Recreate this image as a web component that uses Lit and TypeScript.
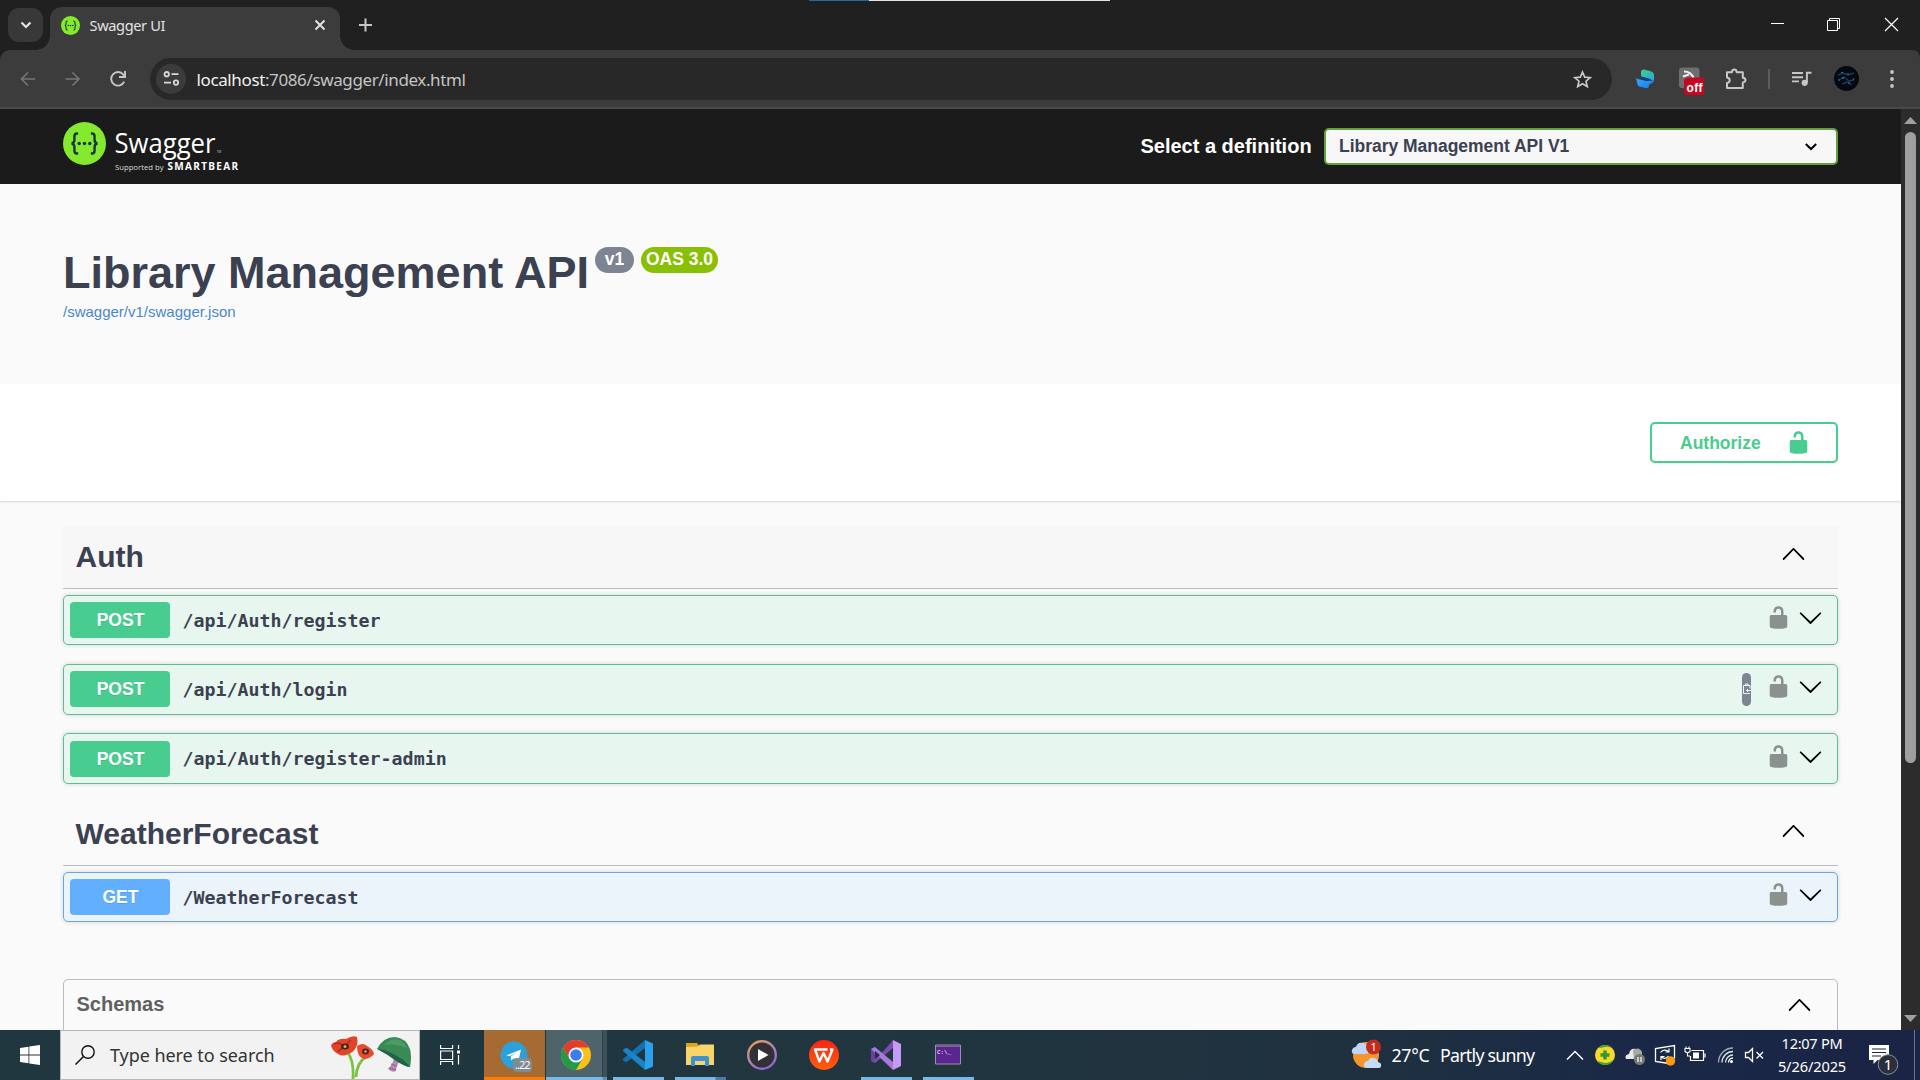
import { LitElement, html, svg, css, nothing } from "lit";
import { customElement, property } from "lit/decorators.js";

const lock = html`<svg class="lock" width="25" height="25" viewBox="0 0 20 20"><path fill="currentColor" d="M15.8 8H14V5.6C14 2.703 12.665 1 10 1 7.334 1 6 2.703 6 5.6V6h2v-.801C8 3.754 8.797 3 10 3c1.203 0 2 .754 2 2.199V8H4c-.553 0-1 .646-1 1.199V17c0 .549.428 1.139.951 1.307l1.197.387C5.672 18.861 6.55 19 7.1 19h5.8c.549 0 1.428-.139 1.951-.307l1.196-.387c.524-.167.953-.757.953-1.306V9.199C17 8.646 16.352 8 15.8 8z"/></svg>`;
const chevron = (up: boolean) => html`<svg class="chev" width="25" height="25" viewBox="0 0 20 20"><path fill="#000" d=${up
  ? "M17.418 14.908c.272.281.709.281.979 0s.271-.736 0-1.014l-7.908-8.139c-.271-.28-.709-.28-.979 0l-7.908 8.139c-.271.278-.271.733 0 1.014s.709.281.979 0L10 7.28z"
  : "M17.418 6.109c.272-.268.709-.268.979 0s.271.701 0 .969l-7.908 7.83c-.27.268-.707.268-.979 0l-7.908-7.83c-.27-.268-.27-.701 0-.969.271-.268.709-.268.979 0L10 13.25z"}/></svg>`;
const braces = svg`<circle cx="22" cy="22" r="22" fill="#85ea2d"/><g fill="none" stroke="#173647" stroke-width="2.5"><path d="M15.5 11.7h-1.2q-2.6 0-2.6 2.8v3.6q0 3.4-2.9 3.9 2.9.5 2.9 3.9v3.6q0 2.8 2.6 2.8h1.2"/><path d="M28.5 11.7h1.2q2.6 0 2.6 2.8v3.6q0 3.4 2.9 3.9-2.9.5-2.9 3.9v3.6q0 2.8-2.6 2.8h-1.2"/></g><g fill="#173647"><circle cx="16.6" cy="22" r="1.8"/><circle cx="22" cy="22" r="1.8"/><circle cx="27.4" cy="22" r="1.8"/></g>`;

@customElement("tab-strip")
class TabStrip extends LitElement {
  static styles = css`
    :host { display: flex; height: 50px; background: #202020; position: relative; font-family: "Noto Sans", "Open Sans", sans-serif; }
    .loading { position: absolute; top: 0; left: 809px; width: 301px; height: 1px; background: linear-gradient(90deg, #1d6ca8 60px, #e6e6e6 60px); }
    .menu { width: 35px; height: 34px; margin: 8px 0 0 8px; border-radius: 11px; background: #383838; display: grid; place-items: center; }
    .tab { width: 290px; height: 43px; margin: 7px 0 0 7px; border-radius: 12px 12px 0 0; background: #3c3c3c; display: flex; align-items: center; position: relative; box-sizing: border-box; padding: 0 14px 7px 10.5px; }
    .tab::before, .tab::after { content: ""; position: absolute; bottom: 0; width: 14px; height: 14px; }
    .tab::before { left: -14px; background: radial-gradient(circle at 0 0, transparent 13.5px, #3c3c3c 14px); }
    .tab::after { right: -14px; background: radial-gradient(circle at 100% 0, transparent 13.5px, #3c3c3c 14px); }
    .title { flex: 1; margin-left: 10px; font-size: 14.6px; letter-spacing: -0.38px; color: #e3e3e3; line-height: 20px; }
    .plus { margin: 18px 0 0 18px; }
    .controls { margin-left: auto; display: flex; }
    .controls svg { width: 57px; height: 50px; }
  `;
  render() {
    return html`
      <div class="loading"></div>
      <div class="menu"><svg width="12" height="8" viewBox="0 0 12 8"><path d="M1.5 1.5 6 6l4.5-4.5" fill="none" stroke="#e3e3e3" stroke-width="2.2"/></svg></div>
      <div class="tab">
        <svg width="19" height="19" viewBox="0 0 44 44">${braces}</svg>
        <span class="title">Swagger UI</span>
        <svg width="12" height="12" viewBox="0 0 12 12"><path d="M1.5 1.5l9 9M10.5 1.5l-9 9" stroke="#e3e3e3" stroke-width="1.9"/></svg>
      </div>
      <svg class="plus" width="14" height="14" viewBox="0 0 14 14"><path d="M7.5 .5v13M1 7h13" stroke="#c7c7c7" stroke-width="2"/></svg>
      <div class="controls">
        <svg viewBox="0 0 57 50"><path d="M22 23.5h13" stroke="#fff" stroke-width="1"/></svg>
        <svg viewBox="0 0 57 50"><path d="M21.5 20.5h10v10h-10zM23.5 20v-1.5h10v10H32" fill="none" stroke="#fff"/></svg>
        <svg viewBox="0 0 57 50"><path d="M22 18l13 13M35 18L22 31" stroke="#fff" stroke-width="1.2"/></svg>
      </div>`;
  }
}

@customElement("nav-bar")
class NavBar extends LitElement {
  static styles = css`
    :host { display: block; background: #202020; }
    .bar { display: flex; align-items: center; height: 57px; background: #3c3c3c; border-bottom: 2px solid #4a4a4a; border-radius: 10px 8px 0 0; padding-left: 5px; box-sizing: content-box; }
    .slot { width: 45px; height: 57px; flex: none; display: grid; place-items: center; }
    .omni { width: 1462px; height: 42px; margin-left: 10px; border-radius: 21px; background: #282828; display: flex; align-items: center; box-sizing: border-box; padding: 0 20px 0 6px; flex: none; }
    .site { width: 30px; height: 30px; border-radius: 50%; background: #3c3c3c; display: grid; place-items: center; }
    .url { flex: 1; margin-left: 10.5px; padding-top: 2px; font: 17px/24px "Noto Sans", "Open Sans", sans-serif; letter-spacing: -0.38px; color: #c4c4c4; }
    .host { color: #f0f0f0; }
    .exts { display: flex; margin-left: 10.5px; }
    .exts .slot { width: 45.3px; }
    .badge { font: 700 12px/14px "Liberation Sans", sans-serif; }
    .sep { width: 2px; height: 20px; background: #5c5c5c; margin: auto 0; }
    .exts .split { width: 20.5px; display: grid; place-items: center; }
  `;
  render() {
    return html`<div class="bar">
      <div class="slot"><svg width="16" height="16" viewBox="0 0 16 16"><path d="M15 8H2M8 1.5L1.5 8 8 14.5" fill="none" stroke="#757575" stroke-width="1.7"/></svg></div>
      <div class="slot"><svg width="16" height="16" viewBox="0 0 16 16"><path d="M.5 8h13M7.5 1.5L14 8 7.5 14.5" fill="none" stroke="#757575" stroke-width="1.7"/></svg></div>
      <div class="slot"><svg width="18" height="18" viewBox="0 0 18 18"><path d="M15.2 11.6A6.8 6.8 0 1 1 14.3 4.6l1.8 2" fill="none" stroke="#c7c7c7" stroke-width="1.9"/><path d="M16 1v6h-6" fill="none" stroke="#c7c7c7" stroke-width="1.9"/></svg></div>
      <div class="omni">
        <div class="site"><svg width="17" height="15" viewBox="0 0 17 15"><g fill="none" stroke="#d8d8d8" stroke-width="1.8"><circle cx="3.7" cy="3.2" r="2.2"/><path d="M8.5 3.2h7M1 11.6h7"/><circle cx="13" cy="11.6" r="2.2"/></g></svg></div>
        <span class="url"><span class="host">localhost</span>:7086/swagger/index.html</span>
        <svg width="19" height="18" viewBox="0 0 19 18"><path d="M9.5 2l2.2 5.1 5.5.5-4.2 3.6 1.3 5.4-4.8-2.9-4.8 2.9L6 11.2 1.8 7.6l5.5-.5z" fill="none" stroke="#c7c7c7" stroke-width="1.7"/></svg>
      </div>
      <div class="exts">
        <div class="slot"><svg width="20" height="20" viewBox="0 0 20 20"><defs><linearGradient id="a" x2="1" y2="1"><stop stop-color="#3fd08c"/><stop offset="1" stop-color="#28a6d8"/></linearGradient><linearGradient id="b" x2="1" y2="1"><stop stop-color="#35b0ff"/><stop offset="1" stop-color="#1778e8"/></linearGradient></defs><path d="M6 7.5V3.5Q6 .5 9 .5l6 1.5q4 1 4 4V12L15 10z" fill="url(#a)"/><path d="M.7 7.5q0 2 2 2.5l9 2 6-.5q1.3 0 1.3-1.2 0 3-2.300 4l-2.300 1-.8 2.600q-.6 1.700-3 1.200L5 17.800q-2.300-.5-2.600-2.500z" fill="url(#b)"/><path d="M6 7.500l9 2.500.5 1.800-3.500.100L6 10.500z" fill="#123f88"/></svg></div>
        <div class="slot"><svg width="28" height="32" viewBox="0 0 28 32"><rect x="3" y="4.5" width="20.5" height="20.5" rx="3" fill="#6e6e6e"/><path d="M8 8.5q7 0 9.5 6.5M7 13.5l6-2" stroke="#eee" stroke-width="2.2" fill="none"/><rect x="8" y="14.5" width="22" height="18" rx="4" fill="#c4081f"/><text class="badge" x="10.5" y="29" fill="#fff" textLength="16">off</text></svg></div>
        <div class="slot"><svg width="22" height="24" viewBox="0 0 22 24"><path d="M2 5.3h4.900Q7 2.500 9.300 2.500T11.700 5.300H17.800v5.500q2.700.2 2.700 2.300t-2.700 2.300v5.500H2v-4.800q2.700-.6 2.700-2.900T2 10.4z" fill="none" stroke="#c7c7c7" stroke-width="2" stroke-linejoin="round"/></svg></div>
        <div class="split"><div class="sep"></div></div>
        <div class="slot"><svg width="21" height="18" viewBox="0 0 21 18"><path d="M1 3h11M1 7.2h11M1 11.4h7M15.9 12.5V2.7h4.600" fill="none" stroke="#c7c7c7" stroke-width="1.9"/><circle cx="13.7" cy="12.8" r="3.1" fill="#c7c7c7"/></svg></div>
        <div class="slot"><svg width="25" height="25" viewBox="0 0 25 25"><circle cx="12.5" cy="12.5" r="12.5" fill="#040810"/><path d="M4 9l5-2 5 2 6-2M5 14l5-3 5 4 5-1M8 18l5-2 5 3" fill="none" stroke="#123f60" stroke-width="1.4"/><g fill="#3186b8"><circle cx="9" cy="12" r=".9"/><circle cx="14" cy="8" r=".8"/><circle cx="15" cy="17" r=".8"/><circle cx="19.5" cy="13" r=".8"/><circle cx="5" cy="14" r=".8"/><circle cx="8" cy="6.5" r=".8"/></g></svg></div>
        <div class="slot"><svg width="4" height="18" viewBox="0 0 4 18"><g fill="#c7c7c7"><circle cx="2" cy="2" r="1.9"/><circle cx="2" cy="9" r="1.9"/><circle cx="2" cy="16" r="1.9"/></g></svg></div>
      </div>
    </div>`;
  }
}

@customElement("swagger-topbar")
class SwaggerTopbar extends LitElement {
  static styles = css`
    :host { display: flex; height: 75px; background: #1b1b1b; box-sizing: border-box; padding: 0 63px; justify-content: space-between; }
    .logo { display: block; margin-top: 12px; }
    .name { font: 400 28px "Open Sans", sans-serif; }
    .by { font: 400 8px "Open Sans", sans-serif; }
    .tm { font: 400 3px "Open Sans", sans-serif; }
    .bear { font: 700 10px "Open Sans", sans-serif; }
    .pick { display: flex; align-items: center; padding-bottom: 1px; font-family: "Liberation Sans", sans-serif; font-weight: 700; }
    .label { font-size: 20px; color: #fff; margin-right: 12.4px; }
    .select { width: 514px; height: 37px; box-sizing: border-box; border: 2px solid #62a03f; border-radius: 5px; background: #f7f7f7; color: #3b4151; font-size: 17.5px; display: flex; align-items: center; justify-content: space-between; padding: 0 18px 0 13px; letter-spacing: -0.02px; }
  `;
  render() {
    return html`
      <svg class="logo" width="190" height="52" viewBox="0 0 190 52"><svg x="0" y="1" width="43" height="43" viewBox="0 0 44 44">${braces}</svg>
        <text class="name" x="51.5" y="31.5" fill="#fff" textLength="101" lengthAdjust="spacingAndGlyphs">Swagger</text>
        <text class="tm" x="153.8" y="31.5" fill="#ccc">TM</text>
        <text class="by" x="52" y="48.8" fill="#ddd" textLength="48.5" lengthAdjust="spacingAndGlyphs">Supported by</text>
        <text class="bear" x="104.5" y="48.8" fill="#fff" textLength="70.500">SMARTBEAR</text></svg>
      <div class="pick"><span class="label">Select a definition</span>
        <div class="select">Library Management API V1<svg width="14" height="9" viewBox="0 0 14 9"><path d="M1.8 2l5.2 5 5.2-5" fill="none" stroke="#000" stroke-width="2"/></svg></div></div>`;
  }
}

@customElement("op-row")
class OpRow extends LitElement {
  @property() method = "POST";
  @property() path = "";
  @property({ type: Boolean }) copy = false;
  static styles = css`
    :host { display: flex; box-sizing: border-box; height: 51px; border: 1px solid #5dbd94; border-radius: 5px; background: #e8f6f0; box-shadow: 0 0 4px rgba(0,0,0,.17); align-items: flex-start; padding: 6px 14px 0 6px; font-family: "Liberation Sans", sans-serif; }
    :host(:first-child) { height: 50px; margin-bottom: 1px; }
    :host(:nth-child(3)) { padding-top: 7px; }
    :host([method="GET"]) { border-color: #6aa6e6; background: #ebf3fb; }
    .method { width: 100px; height: 36px; box-sizing: border-box; padding-left: 1px; border-radius: 4px; background: #49cc90; color: #fff; font-weight: 700; font-size: 17.5px; line-height: 37px; text-align: center; text-shadow: 0 1px 0 rgba(0,0,0,.1); }
    :host([method="GET"]) .method { background: #61affe; }
    .path { flex: 1; margin-left: 12.5px; font: 700 18.3px/24px "DejaVu Sans Mono", monospace; letter-spacing: 0; color: #3b4151; padding-top: 7px; }
    :host(:nth-child(3)) .path { padding-top: 6px; }
    .lock { color: #8b918e; margin: 3px 7px 0 0; }
    .chev { margin-top: 3px; }
    .clip { width: 9px; height: 33px; border-radius: 5px; background: #7d8492; margin: 2px 15px 0 0; }
  `;
  render() {
    return html`<div class="method">${this.method}</div><div class="path">${this.path}</div>
      ${this.copy ? html`<svg class="clip" viewBox="0 0 9 33"><g fill="none" stroke="#fff" stroke-width=".9"><path d="M8 15.500v-3H1.500v8H8M3.500 12.500v-1.500h2.500v1.500"/><path d="M9 17.500H4.500m1.500-1.500l-1.500 1.500L6 19"/></g></svg>` : nothing}
      ${lock}${chevron(false)}`;
  }
}

const groups = [
  { name: "Auth", hover: true, ops: [["POST", "/api/Auth/register"], ["POST", "/api/Auth/login"], ["POST", "/api/Auth/register-admin"]] },
  { name: "WeatherForecast", hover: false, ops: [["GET", "/WeatherForecast"]] },
];

@customElement("swagger-page")
class SwaggerPage extends LitElement {
  static styles = css`
    :host { display: block; flex: 1; background: #fafafa; font-family: "Liberation Sans", sans-serif; color: #3b4151; overflow: hidden; }
    .info { height: 200px; box-sizing: border-box; padding: 58px 63px 0; }
    .head { display: flex; align-items: flex-start; height: 58px; }
    h1 { margin: 5px 6px 0 0; font-size: 45px; line-height: 52px; }
    .pill { height: 26px; margin: 5px 7px 0 0; border-radius: 13px; background: #7d8492; color: #fff; font-weight: 700; font-size: 17.5px; line-height: 25px; width: 39px; text-align: center; }
    .pill.oas { background: #89bf04; width: 77px; }
    .link { font-size: 15px; line-height: 18px; color: #4988d0; padding-top: 3px; }
    .scheme { height: 117px; box-sizing: border-box; background: #fff; box-shadow: 0 1px 2px rgba(0,0,0,.15); padding: 38px 63px 0; display: flex; justify-content: flex-end; }
    .auth { width: 188px; height: 41px; box-sizing: border-box; border: 2px solid #49cc90; border-radius: 5px; color: #49cc90; font-weight: 700; font-size: 17.5px; display: flex; align-items: center; justify-content: space-between; padding: 0 25px 0 28px; box-shadow: 0 1px 2px rgba(0,0,0,.08); }
    .auth span { padding-top: 2px; }
    .body { padding: 25px 63px 0; }
    .group { height: 277px; }
    .group.small { height: 176px; }
    .tag { height: 63px; box-sizing: border-box; border-bottom: 1px solid #b9bcc2; display: flex; align-items: center; justify-content: space-between; padding: 0 32px 2px 12.5px; font-size: 30px; font-weight: 700; margin-bottom: 6px; }
    .tag span { padding-top: 2px; }
    .tag .chev { margin-top: -6px; }
    .tag.hover { background: #f7f7f7; }
    .ops { display: flex; flex-direction: column; gap: 18px; }
    .models { height: 80px; border: 1px solid #b9bcc2; border-radius: 5px; box-sizing: border-box; padding: 12px 25px 0 12.5px; display: flex; justify-content: space-between; align-items: flex-start; font-size: 20px; font-weight: 700; color: #606060; line-height: 24px; }
  `;
  render() {
    return html`<swagger-topbar></swagger-topbar>
      <div class="info">
        <div class="head"><h1>Library Management API</h1><span class="pill">v1</span><span class="pill oas">OAS 3.0</span></div>
        <div class="link">/swagger/v1/swagger.json</div>
      </div>
      <div class="scheme"><div class="auth"><span>Authorize</span>${lock}</div></div>
      <div class="body">
        ${groups.map(g => html`<div class="group ${g.hover ? "" : "small"}">
          <div class="tag ${g.hover ? "hover" : ""}"><span>${g.name}</span>${chevron(true)}</div>
          <div class="ops">${g.ops.map(([m, p]) => html`<op-row method=${m} path=${p} ?copy=${p.endsWith("login")}></op-row>`)}</div>
        </div>`)}
        <div class="models"><span>Schemas</span>${chevron(true)}</div>
      </div>`;
  }
}

@customElement("task-bar")
class TaskBar extends LitElement {
  static styles = css`
    :host { display: flex; height: 50px; background: linear-gradient(90deg, #20373f, #21363f 45%, #1f313f 70%, #1a2847 86%, #1a2444); font-family: "Noto Sans", "Open Sans", sans-serif; color: #fff; }
    .start { width: 60px; display: grid; place-items: center; }
    .search { width: 360px; box-sizing: border-box; background: #f2f2f2; border: 1px solid #b8b8b8; display: flex; align-items: center; color: #333; padding-left: 14px; }
    .hint { flex: 1; margin-left: 15px; font-size: 18px; letter-spacing: -0.06px; line-height: 24px; padding-bottom: 1px; }
    .view { width: 63px; padding: 15px 0 0 20px; box-sizing: border-box; }
    .apps { display: flex; }
    .app { width: 62px; height: 50px; box-sizing: border-box; display: flex; flex-direction: column; align-items: center; padding-top: 10px; position: relative; }
    .app svg { width: 30px; height: 30px; flex: none; overflow: visible; }
    .app::after { content: ""; position: absolute; bottom: 0; left: 6px; width: 51px; height: 3px; background: #76b9ed; }
    .app.idle::after { display: none; }
    .telegram { background: linear-gradient(90deg, transparent 1px, #a66a33 1px); }
    .telegram::after { left: 1px; width: 61px; background: #ff7a00; }
    .chrome { background: linear-gradient(90deg, transparent 1px, #4f636b 1px 57px, #2c434c 57px 58px, #3c525b 58px); }
    .chrome::after { left: 1px; width: 61px; background: linear-gradient(90deg, #76b9ed 56px, #5b90b8 57px); }
    .explorer::after { background: linear-gradient(90deg, #76b9ed 40px, #4d7ba5 41px); }
    .count { font: 11px "Noto Sans", sans-serif; }
    .weather { display: flex; align-items: center; margin-left: auto; width: 209px; font-size: 17.8px; line-height: 24px; white-space: pre; }
    .weather span { padding-bottom: 1px; }
    .temp { margin: 0 10.5px 0 8.5px; letter-spacing: -0.3px; }
    .sky { letter-spacing: -0.74px; }
    .tray { display: flex; }
    .tray svg { width: 30px; height: 50px; }
    .clock { width: 84px; text-align: center; font-size: 14.6px; line-height: 23px; letter-spacing: -0.3px; padding: 2px 0 0 0; box-sizing: border-box; }
    .date { letter-spacing: -0.12px; }
    .note { width: 60px; height: 50px; }
    .num { font: 15px "Noto Sans", sans-serif; }
    .desk { width: 6px; box-sizing: border-box; border-left: 1px solid #69758c; }
  `;
  render() {
    return html`
      <div class="start"><svg width="20" height="20" viewBox="0 0 20 20"><path fill="#fff" d="M0 3l8.5-1.3V9.5H0zM9.3 1.5L20 0v9.5H9.3zM0 10.4h8.5v7.8L0 17zM9.3 10.4H20V20L9.3 18.4z"/></svg></div>
      <div class="search">
        <svg width="20" height="20" viewBox="0 0 20 20"><circle cx="13" cy="7" r="6.2" fill="none" stroke="#111" stroke-width="1.4"/><path d="M8.5 11.5L.5 19.5" stroke="#111" stroke-width="1.5"/></svg>
        <span class="hint">Type here to search</span>
        <svg width="88" height="48" viewBox="0 0 88 48"><path d="M17 22q6 8 5 26M35 26q-9 5-10 20" fill="none" stroke="#7cc142" stroke-width="2.8"/>
          <path d="M0 14Q2 11 5 11 8 7 15 8 22 4 26 6q1 4 0 8-3 8-9 9-5 3-10 0Q1 20 0 14z" fill="#e2442a"/><path d="M3 13q5-2 9 1M20 9q-3 2-4 4M7 21q2-3 5-4" stroke="#b02a18" stroke-width="1.4" fill="none"/><ellipse cx="14" cy="15.5" rx="4" ry="3" fill="#3a2526"/><circle cx="14" cy="15.5" r="1.5" fill="#f1a83b"/>
          <path d="M26 15q6-4 10 0 6 3 7 8-4 5-10 5-7-2-7-13z" fill="#e84a2b"/><ellipse cx="34.5" cy="20.5" rx="3.5" ry="3" fill="#4a2426"/><circle cx="34.5" cy="20.5" r="1.2" fill="#f0a43b"/>
          <path d="M63 27q-1 6-6 11 4 4 8 2 0-6 5-11z" fill="#b98ab0"/><path d="M60 33l6 2M58 37l7 2" stroke="#8d5c8b"/><path d="M46 18Q52 6 64 6q11 1 15 12 2 8 0 18-5 0-12-6Q57 21 46 18z" fill="#3a8a55"/><path d="M53 14Q60 7 69 9q5 3 7 8-12-5-23-3z" fill="#4b9c63"/><path d="M46 18q8 0 20 7 9 5 13 11-6-1-14-6Q56 23 46 18z" fill="#1f6346"/></svg>
      </div>
      <div class="view"><svg width="20" height="20" viewBox="0 0 20 20"><g fill="none" stroke="#fff" stroke-width="1.2"><path d="M.6 0v3.5h12V0M.6 20v-3.5h12V20M.6 6h12v8.5H.6zM18.5 0v4M18.5 10v9.5"/></g><path d="M17 5.5h3v3h-3z" fill="#fff"/></svg></div>
      <div class="apps">
        <div class="app telegram"><svg viewBox="0 0 30 30"><circle cx="15" cy="15" r="13.5" fill="#2ca0da"/><path d="M7 15.5L22 9.500l-2.7 12-4.5-3.3-2.6 2.4-.5-4 7-5-7.5 4.3z" fill="#fff"/><rect x="14" y="18" width="19" height="14" rx="4" fill="#7f8a91"/><text class="count" x="16" y="29" fill="#fff" textLength="15.5">..22</text></svg></div>
        <div class="app chrome"><svg viewBox="0 0 30 30"><circle cx="15" cy="15" r="15" fill="#fbc116"/><path d="M2 7.5A15 15 0 0 1 28 7.5H15L8.5 18.75z" fill="#e33b2e"/><path d="M2 7.5A15 15 0 0 0 15 30l6.5-11.25h-13z" fill="#229a48"/><circle cx="15" cy="15" r="7.5" fill="#fff"/><circle cx="15" cy="15" r="5.8" fill="#3b7ded"/></svg></div>
        <div class="app"><svg viewBox="0 0 30 30"><path d="M22 0v8L4.5 21.5 2.5 22 0 20.2 0 19z" fill="#1272b4"/><path d="M0 10l2.5-2 2 .3L22 22v8L0 11z" fill="#1b83c8"/><path d="M22 0l8 3.5v23L22 30z" fill="#2ba1ec"/></svg></div>
        <div class="app explorer"><svg viewBox="0 0 30 30"><path d="M1 3h11l2 2.5V10H1z" fill="#dfa21b"/><path d="M1 7l12-.5 2-2h14V25H1z" fill="#f8d568"/><path d="M6 26V18q0-2 2-2h14q2 0 2 2v8h-4v-5H10v5z" fill="#3f92cf"/></svg></div>
        <div class="app idle"><svg viewBox="0 0 30 30"><defs><linearGradient id="m" x2=".6" y2="1"><stop stop-color="#f09a4c"/><stop offset=".5" stop-color="#b98aa8"/><stop offset="1" stop-color="#9266cf"/></linearGradient></defs><circle cx="15" cy="15" r="13.8" fill="#303036" stroke="url(#m)" stroke-width="2.4"/><path d="M11 9l10.5 6L11 21z" fill="#fff"/></svg></div>
        <div class="app idle"><svg viewBox="0 0 30 30"><defs><linearGradient id="w" x2="0" y2="1"><stop stop-color="#f62419"/><stop offset="1" stop-color="#ff6009"/></linearGradient></defs><circle cx="15" cy="15" r="15" fill="url(#w)"/><path d="M18.5 9.500H6l4.500 12L14.500 13l4 8.500 5-12h-2.500" fill="none" stroke="#fff" stroke-width="2.4" stroke-linejoin="round"/></svg></div>
        <div class="app"><svg viewBox="0 0 30 30"><path d="M0 9l4-2v16l-4-2z" fill="#6b3fa6"/><path d="M22 0v8L4 23l-3-1.5L10 14z" fill="#7a4db5"/><path d="M4 7l18 15v8L0 9z" fill="#a77bdc"/><path d="M4 11v8l5-4z" fill="#21353f"/><path d="M22 0l8 4v22l-8 4z" fill="#c59af4"/></svg></div>
        <div class="app"><svg viewBox="0 0 30 30"><path d="M2.5 5h25v19h-25z" fill="#5a2590" stroke="#9a93a3"/><path d="M3 5.5h24V7H3z" fill="#7d6296"/><text x="4" y="13.5" font-size="6" font-family="Liberation Mono" fill="#fff" textLength="14">C:\\_</text></svg></div>
      </div>
      <div class="weather"><svg width="32" height="32" viewBox="0 0 32 32"><circle cx="15" cy="16" r="13" fill="#f6952b"/><path d="M3 15q-3-1-2-4 1-3 4-3 2-5 6-4 5 0 5 5 3 1 2 4-1 2-4 2z" fill="#c0d4f5"/><path d="M16 29q-4-1-3-4 1-3 4-3 2-4 6-3 4 1 4 4 4 1 3 4 0 2-3 2z" fill="#c9daf7"/><circle cx="22.5" cy="8" r="7.5" fill="#c42b1c"/><text class="count" x="19.5" y="12" fill="#fff">1</text></svg><span class="temp">27°C</span><span class="sky">Partly sunny</span></div>
      <div class="tray">
        <svg viewBox="0 0 30 50"><path d="M7 29.5l8-8 8 8" fill="none" stroke="#fff" stroke-width="1.5"/></svg>
        <svg viewBox="0 0 30 50"><circle cx="15" cy="25" r="10" fill="#f8d92b"/><path d="M8 18Q13 13 20 16l3 3q-4-3-8-2T8 18zM7 31q5 6 13 3l4-5q-4 4-9 4z" fill="#43a32d"/><path d="M15 20.5v9M10.5 25h9" stroke="#2e9a36" stroke-width="3.4"/></svg>
        <svg viewBox="0 0 30 50"><path d="M6 29q-2-4 3-5 1-6 7-5 5 0 6 6 3 2 1 4z" fill="#e8e8e8"/><path d="M13 20q6-4 9 2v8h-8z" fill="#a7a7a7"/><circle cx="19.5" cy="29.5" r="5.5" fill="#777"/><path d="M18 27v5M21 27v5" stroke="#fff" stroke-width="1.2"/></svg>
        <svg viewBox="0 0 30 50"><path d="M19 33.5L5.5 31.5v-13l19-3v13" fill="none" stroke="#fff" stroke-width="1.3"/><path d="M10.5 22.5q3-4 8-1m.5-3v3.500h-3.5M18.5 26q-3 4-7.5 1m0 3V26.5h3.5" fill="none" stroke="#fff" stroke-width="1.2"/><circle cx="20.5" cy="31" r="4.7" fill="#ff9a0f"/></svg>
        <svg viewBox="0 0 30 50"><path d="M11.5 20.5h12v10H10.5V26M25 23.5v4" fill="none" stroke="#fff" stroke-width="1.2"/><path d="M13 22.5h6v6h-6z" fill="#fff"/><path d="M5 18.5h5v3q-2.5 2.5-5 0zM6 16.5v2M9 16.5v2M7.5 23v3H10" fill="none" stroke="#fff" stroke-width="1.1"/></svg>
        <svg viewBox="0 0 30 50"><g fill="none" stroke-width="1.3"><path d="M8.5 32.5A14.5 14.5 0 0 1 23 18" stroke="#a5adbb"/><path d="M12 32.5A11 11 0 0 1 23 21.5M15.5 32.5a7.5 7.5 0 0 1 7.5-7.5" stroke="#dfe3ea"/><path d="M18.5 32.5A4.5 4.5 0 0 1 23 28" stroke="#fff"/></g><circle cx="21.5" cy="31.5" r="1.5" fill="#fff"/></svg>
        <svg viewBox="0 0 30 50"><path d="M5.5 22.5h3l4-4v13l-4-4h-3zM16.5 22l6.5 6.5M23 22L16.5 28.5" fill="none" stroke="#fff" stroke-width="1.3"/></svg>
      </div>
      <div class="clock">12:07 PM<br><span class="date">5/26/2025</span></div>
      <svg class="note" viewBox="0 0 60 50"><path d="M15 15h20v15H23.5l-4 4v-4H15z" fill="#fff"/><path d="M18 19h14M18 22.5h14M18 26h9" stroke="#1a2444" stroke-width="1.2"/><circle cx="34" cy="34.5" r="9.8" fill="#2b2f3a" stroke="#8a8f9a"/><text class="num" x="29.8" y="40" fill="#fff">1</text></svg>
      <div class="desk"></div>`;
  }
}

@customElement("app-root")
class AppRoot extends LitElement {
  static styles = css`
    :host { display: flex; flex-direction: column; width: 1920px; height: 1080px; overflow: hidden; }
    .view { display: flex; flex: 1; min-height: 0; }
    .scroll { width: 19px; background: #2c2c2c; display: flex; flex-direction: column; align-items: center; padding: 8px 0; box-sizing: border-box; }
    .thumb { width: 11px; height: 631px; border-radius: 6px; background: #9f9f9f; margin: 8px 0 auto; }
    .scroll svg { display: block; }
  `;
  render() {
    return html`<tab-strip></tab-strip><nav-bar></nav-bar>
      <div class="view"><swagger-page></swagger-page>
        <div class="scroll"><svg width="13" height="7" viewBox="0 0 13 7"><path d="M0 7L6.5 0 13 7z" fill="#9f9f9f"/></svg><div class="thumb"></div><svg width="13" height="7" viewBox="0 0 13 7"><path d="M0 0h13L6.5 7z" fill="#9f9f9f"/></svg></div>
      </div>
      <task-bar></task-bar>`;
  }
}
